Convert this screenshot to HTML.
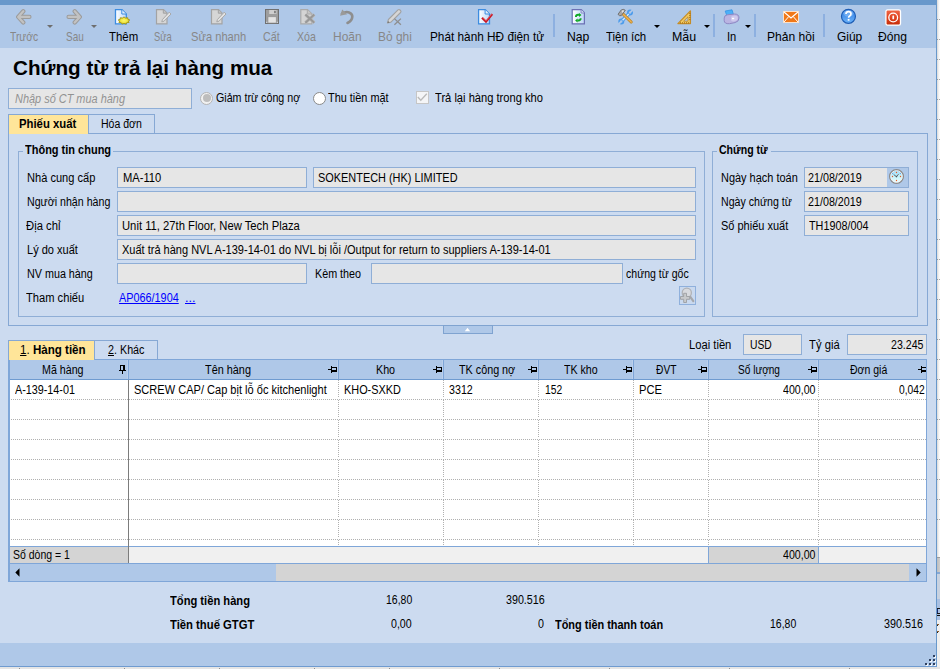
<!DOCTYPE html>
<html lang="vi"><head><meta charset="utf-8"><title>Chứng từ trả lại hàng mua</title>
<style>
html,body{margin:0;padding:0;}
body{width:940px;height:669px;overflow:hidden;background:#CCDBF0;font-family:"Liberation Sans",sans-serif;font-size:12.5px;color:#000;}
#app{position:relative;width:940px;height:669px;overflow:hidden;}
#app div,#app svg,#app span{position:absolute;box-sizing:border-box;}
.t{white-space:nowrap;transform-origin:0 0;z-index:3;}
.inp{background:#E6E6E6;border:1px solid #8FAED6;}
.grp{border:1px solid #8FAED6;}

</style></head><body>
<div id="app">
<!-- window chrome -->
<div style="left:0;top:0;width:937px;height:5px;background:#6898CB"></div>
<div id="tb" style="left:0;top:5px;width:936px;height:43px;background:#AFC8E8"></div>
<!-- right outside strip -->
<div style="left:937px;top:0;width:3px;height:669px;background:linear-gradient(90deg,#D9D9D9,#F4F4F4 60%,#FFFFFF)"></div>
<div style="left:937px;top:557px;width:3px;height:15px;background:linear-gradient(90deg,#BDBDBD,#CECECE)"></div>
<div style="left:937px;top:557px;width:3px;height:1px;background:#9C9C9C"></div>
<div style="left:937px;top:572px;width:3px;height:2px;background:#86A8D4"></div>
<div style="left:937px;top:574px;width:3px;height:25px;background:#C8D2E0"></div>
<div style="left:937px;top:599px;width:3px;height:21px;background:#A9C0E2"></div>
<div style="left:937px;top:608px;width:3px;height:1px;background:#181818"></div>
<div style="left:937px;top:609px;width:1px;height:4px;background:#1A2A6A"></div>
<div style="left:937px;top:613px;width:3px;height:1px;background:#181818"></div>
<div style="left:937px;top:615px;width:3px;height:1px;background:#101010"></div>
<div style="left:937px;top:620px;width:3px;height:49px;background:#EFEFEF"></div>
<div style="left:937px;top:624px;width:2px;height:1px;background:#8A5A2A"></div>
<div style="left:937px;top:625px;width:1px;height:1px;background:#222"></div>
<div style="left:937px;top:631px;width:2px;height:1px;background:#8A5A2A"></div>
<div style="left:937px;top:632px;width:1px;height:1px;background:#222"></div>
<div style="left:937px;top:19px;width:1px;height:520px;background:repeating-linear-gradient(180deg,#9A9A9A 0,#9A9A9A 1px,transparent 1px,transparent 20px)"></div>
<div style="left:939px;top:19px;width:1px;height:520px;background:repeating-linear-gradient(180deg,#A4A4A4 0,#A4A4A4 1px,transparent 1px,transparent 20px)"></div>
<div style="left:936px;top:0;width:1px;height:667px;background:#6898CB"></div>
<!-- status bar -->
<div style="left:0;top:643px;width:936px;height:23px;background:#AFC8E8"></div>
<div style="left:0;top:666px;width:937px;height:1px;background:#6F9BD0"></div>
<div style="left:0;top:667px;width:940px;height:2px;background:#E5E5E5"></div>
<div style="left:19px;top:668px;width:1px;height:1px;background:#8E8E8E"></div>
<div style="left:124px;top:668px;width:1px;height:1px;background:#8E8E8E"></div>
<div style="left:219px;top:668px;width:1px;height:1px;background:#8E8E8E"></div>
<div style="left:314px;top:668px;width:1px;height:1px;background:#8E8E8E"></div>
<div style="left:389px;top:668px;width:1px;height:1px;background:#8E8E8E"></div>
<div style="left:499px;top:668px;width:1px;height:1px;background:#8E8E8E"></div>
<div style="left:609px;top:668px;width:1px;height:1px;background:#8E8E8E"></div>
<div style="left:729px;top:668px;width:1px;height:1px;background:#8E8E8E"></div>
<div style="left:849px;top:668px;width:1px;height:1px;background:#8E8E8E"></div>

<!-- search input -->
<div class="inp" style="left:8px;top:88px;width:184px;height:21px"></div>
<!-- radios / checkbox -->
<div style="left:200px;top:91.500px;width:13px;height:13px;border-radius:50%;border:1px solid #B4B4B4;background:#F1F1F1"></div>
<div style="left:202.500px;top:94px;width:8px;height:8px;border-radius:50%;background:#BDBDBD"></div>
<div style="left:313px;top:91.500px;width:13px;height:13px;border-radius:50%;border:1px solid #8A8A8A;background:#fff"></div>
<div style="left:416px;top:91px;width:13px;height:13px;border:1px solid #C6C6C6;background:#F4F5F7"></div>
<svg style="left:416px;top:91px" width="13" height="13" viewBox="0 0 13 13"><path d="M1.800 6 L4.800 9.300 L10.800 2.800" fill="none" stroke="#BABABA" stroke-width="1.300"/></svg>

<!-- top tabs -->
<div style="left:8px;top:133px;width:920px;height:193px;border:1px solid #86A8D4"></div>
<div style="left:8px;top:114px;width:81px;height:20px;background:#FFE599;border:1px solid #86A8D4;border-bottom:none"></div>
<div style="left:88px;top:114px;width:67px;height:19px;border:1px solid #86A8D4;border-bottom:none"></div>

<!-- group boxes -->
<div class="grp" style="left:18px;top:151px;width:687px;height:166px"></div>
<div style="left:23px;top:144px;width:90px;height:14px;background:#CCDBF0"></div>
<div class="grp" style="left:712px;top:151px;width:206px;height:166px"></div>
<div style="left:717px;top:144px;width:54px;height:14px;background:#CCDBF0"></div>

<!-- inputs group 1 -->
<div class="inp" style="left:117px;top:167px;width:190px;height:21px"></div>
<div class="inp" style="left:313px;top:167px;width:383px;height:21px"></div>
<div class="inp" style="left:117px;top:191px;width:579px;height:21px"></div>
<div class="inp" style="left:117px;top:215px;width:579px;height:21px"></div>
<div class="inp" style="left:117px;top:239px;width:579px;height:21px"></div>
<div class="inp" style="left:117px;top:263px;width:190px;height:21px"></div>
<div class="inp" style="left:371px;top:263px;width:252px;height:21px"></div>
<!-- zoom button -->
<div style="left:679px;top:286px;width:17px;height:19px;border:1px solid #8FB0DC;background:#C9D9EF"></div>
<svg style="left:679px;top:286px" width="17" height="19" viewBox="0 0 17 19"><path d="M10.800 10.200 L14.300 15.200" stroke="#A6A8AC" stroke-width="2.200" stroke-linecap="round"/><circle cx="7.800" cy="6.800" r="4.600" fill="#D8DADE" stroke="#B0B2B6" stroke-width="1.300"/><path d="M4.700 7.300h2.800v3.200h3.200v2.800h-3.200v3.200h-2.800v-3.200h-3.200v-2.800h3.200z" fill="#C8CACC" stroke="#9C9EA2" stroke-width=".9"/></svg>

<!-- inputs group 2 -->
<div class="inp" style="left:804px;top:167px;width:105px;height:21px"></div>
<div style="left:887px;top:168px;width:21px;height:19px;background:#AFC8E8"></div>
<svg style="left:888px;top:168px" width="17" height="17" viewBox="0 0 17 17"><defs><linearGradient id="cg" x1="0" y1="0" x2="0" y2="1"><stop offset="0" stop-color="#9CD8F8"/><stop offset=".55" stop-color="#C8F4FA"/><stop offset="1" stop-color="#F4FEFE"/></linearGradient></defs><circle cx="8.500" cy="8.500" r="6.700" fill="url(#cg)" stroke="#8C8C8C" stroke-width="1.700"/><circle cx="8.500" cy="8.500" r="5.900" fill="none" stroke="#F2F6F8" stroke-width=".9"/><g fill="#F05820"><circle cx="8.500" cy="4.500" r=".65"/><circle cx="8.500" cy="12.500" r=".65"/><circle cx="4.500" cy="8.500" r=".65"/><circle cx="12.500" cy="8.500" r=".65"/></g><g fill="#3C8CE4"><circle cx="4.700" cy="5.500" r=".5"/><circle cx="12.300" cy="5.500" r=".5"/></g><path d="M5.700 6.600 L8.500 8.600 L10.500 6.200" fill="none" stroke="#50585C" stroke-width=".9"/><circle cx="8.500" cy="8.600" r=".8" fill="#50585C"/></svg>
<div class="inp" style="left:804px;top:191px;width:105px;height:21px"></div>
<div class="inp" style="left:804px;top:215px;width:105px;height:21px"></div>

<!-- splitter button -->
<div style="left:443px;top:325px;width:50px;height:9px;background:#AFC8E8;border:1px solid #7FA3D0"></div>
<svg style="left:464px;top:327px" width="7" height="5" viewBox="0 0 7 5"><path d="M0.800 4.200 L3.500 0.800 L6.200 4.200Z" fill="#fff"/></svg>

<!-- lower tabs -->
<div style="z-index:2;left:8px;top:340px;width:87px;height:20px;background:#FFE599;border:1px solid #86A8D4;border-bottom:none"></div>
<div style="left:94px;top:340px;width:64px;height:19px;border:1px solid #86A8D4;border-bottom:none"></div>
<div class="inp" style="left:743px;top:334px;width:59px;height:21px"></div>
<div class="inp" style="left:847px;top:334px;width:80px;height:21px"></div>

<!-- grid -->
<div style="left:8px;top:359px;width:1px;height:223px;background:#7FA6D8"></div>
<div id="grid" style="left:9px;top:359px;width:918px;height:223px;background:#fff;border:1px solid #7FA6D8"></div>
<div style="left:10px;top:360px;width:916px;height:20px;background:#AFC8E8;border-bottom:1px solid #6F9BD0"></div>
<div style="left:128px;top:360px;width:1px;height:19px;background:#7FA6D8"></div>
<div style="left:127px;top:360px;width:1px;height:19px;background:#BBD0EC"></div>
<div style="left:338px;top:360px;width:1px;height:19px;background:#7FA6D8"></div>
<div style="left:337px;top:360px;width:1px;height:19px;background:#BBD0EC"></div>
<div style="left:443px;top:360px;width:1px;height:19px;background:#7FA6D8"></div>
<div style="left:442px;top:360px;width:1px;height:19px;background:#BBD0EC"></div>
<div style="left:538px;top:360px;width:1px;height:19px;background:#7FA6D8"></div>
<div style="left:537px;top:360px;width:1px;height:19px;background:#BBD0EC"></div>
<div style="left:633px;top:360px;width:1px;height:19px;background:#7FA6D8"></div>
<div style="left:632px;top:360px;width:1px;height:19px;background:#BBD0EC"></div>
<div style="left:708px;top:360px;width:1px;height:19px;background:#7FA6D8"></div>
<div style="left:707px;top:360px;width:1px;height:19px;background:#BBD0EC"></div>
<div style="left:818px;top:360px;width:1px;height:19px;background:#7FA6D8"></div>
<div style="left:817px;top:360px;width:1px;height:19px;background:#BBD0EC"></div>
<div style="left:128px;top:380px;width:1px;height:183px;background:#7C7C7C"></div>
<div style="left:338px;top:380px;width:1px;height:166px;background:repeating-linear-gradient(180deg,transparent 0,transparent 17px,#fff 17px,#fff 20px),repeating-linear-gradient(180deg,#B0B0B0 0,#B0B0B0 1px,transparent 1px,transparent 2px)"></div>
<div style="left:443px;top:380px;width:1px;height:166px;background:repeating-linear-gradient(180deg,transparent 0,transparent 17px,#fff 17px,#fff 20px),repeating-linear-gradient(180deg,#B0B0B0 0,#B0B0B0 1px,transparent 1px,transparent 2px)"></div>
<div style="left:538px;top:380px;width:1px;height:166px;background:repeating-linear-gradient(180deg,transparent 0,transparent 17px,#fff 17px,#fff 20px),repeating-linear-gradient(180deg,#B0B0B0 0,#B0B0B0 1px,transparent 1px,transparent 2px)"></div>
<div style="left:633px;top:380px;width:1px;height:166px;background:repeating-linear-gradient(180deg,transparent 0,transparent 17px,#fff 17px,#fff 20px),repeating-linear-gradient(180deg,#B0B0B0 0,#B0B0B0 1px,transparent 1px,transparent 2px)"></div>
<div style="left:708px;top:380px;width:1px;height:166px;background:repeating-linear-gradient(180deg,transparent 0,transparent 17px,#fff 17px,#fff 20px),repeating-linear-gradient(180deg,#B0B0B0 0,#B0B0B0 1px,transparent 1px,transparent 2px)"></div>
<div style="left:818px;top:380px;width:1px;height:166px;background:repeating-linear-gradient(180deg,transparent 0,transparent 17px,#fff 17px,#fff 20px),repeating-linear-gradient(180deg,#B0B0B0 0,#B0B0B0 1px,transparent 1px,transparent 2px)"></div>
<div style="left:11px;top:399px;width:915px;height:1px;background:repeating-linear-gradient(90deg,#B0B0B0 0,#B0B0B0 1px,transparent 1px,transparent 2px)"></div>
<div style="left:11px;top:419px;width:915px;height:1px;background:repeating-linear-gradient(90deg,#B0B0B0 0,#B0B0B0 1px,transparent 1px,transparent 2px)"></div>
<div style="left:11px;top:439px;width:915px;height:1px;background:repeating-linear-gradient(90deg,#B0B0B0 0,#B0B0B0 1px,transparent 1px,transparent 2px)"></div>
<div style="left:11px;top:459px;width:915px;height:1px;background:repeating-linear-gradient(90deg,#B0B0B0 0,#B0B0B0 1px,transparent 1px,transparent 2px)"></div>
<div style="left:11px;top:479px;width:915px;height:1px;background:repeating-linear-gradient(90deg,#B0B0B0 0,#B0B0B0 1px,transparent 1px,transparent 2px)"></div>
<div style="left:11px;top:499px;width:915px;height:1px;background:repeating-linear-gradient(90deg,#B0B0B0 0,#B0B0B0 1px,transparent 1px,transparent 2px)"></div>
<div style="left:11px;top:519px;width:915px;height:1px;background:repeating-linear-gradient(90deg,#B0B0B0 0,#B0B0B0 1px,transparent 1px,transparent 2px)"></div>
<div style="left:11px;top:539px;width:915px;height:1px;background:repeating-linear-gradient(90deg,#B0B0B0 0,#B0B0B0 1px,transparent 1px,transparent 2px)"></div>
<div style="left:128px;top:380px;width:1px;height:183px;background:#7C7C7C"></div>
<div style="left:10px;top:546px;width:916px;height:18px;background:#F0F0F0;border-top:1px solid #7FA6D8;border-bottom:1px solid #7FA6D8"></div>
<div style="left:10px;top:547px;width:118px;height:16px;background:#D4D4D4"></div>
<div style="left:128px;top:546px;width:1px;height:17px;background:#7C7C7C"></div>
<div style="left:708px;top:547px;width:111px;height:16px;background:#D4D4D4;border-left:1px solid #7FA6D8;border-right:1px solid #7FA6D8"></div>
<div style="left:10px;top:564px;width:916px;height:17px;background:#D4D4D4"></div>
<div style="left:10px;top:564px;width:266px;height:17px;background:#AFC8E8"></div>
<div style="left:909px;top:564px;width:17px;height:17px;background:#AFC8E8"></div>
<svg style="left:14.600px;top:568px" width="5" height="9" viewBox="0 0 5 9"><path d="M4.500 0.300 L0.300 4.500 L4.500 8.700Z" fill="#000"/></svg>
<svg style="left:915.600px;top:568px" width="5" height="9" viewBox="0 0 5 9"><path d="M0.500 0.300 L4.700 4.500 L0.500 8.700Z" fill="#000"/></svg>
<!-- resize grip -->
<svg style="left:925px;top:655px" width="11" height="11" viewBox="0 0 11 11" shape-rendering="crispEdges"><g fill="#F4F8FC"><rect x="9" y="1" width="2" height="2"/><rect x="5" y="5" width="2" height="2"/><rect x="9" y="5" width="2" height="2"/><rect x="1" y="9" width="2" height="2"/><rect x="5" y="9" width="2" height="2"/><rect x="9" y="9" width="2" height="2"/></g><g fill="#2E4060"><rect x="8" y="0" width="2" height="2"/><rect x="4" y="4" width="2" height="2"/><rect x="8" y="4" width="2" height="2"/><rect x="0" y="8" width="2" height="2"/><rect x="4" y="8" width="2" height="2"/><rect x="8" y="8" width="2" height="2"/></g></svg>
<!-- toolbar icons -->
<svg style="left:15.500px;top:8.500px" width="16" height="16" viewBox="0 0 16 16" fill="none" stroke-linecap="round" stroke-linejoin="round"><path d="M7.300 2.300 L2.200 7.900 L7.300 13.500 M3 7.900 H13.400" stroke="#9B9B9B" stroke-width="4.300"/><path d="M7.300 2.300 L2.200 7.900 L7.300 13.500 M3 7.900 H13.400" stroke="#C2C2C2" stroke-width="2.300"/></svg>
<svg style="left:65.800px;top:8.500px" width="16" height="16" viewBox="0 0 16 16" fill="none" stroke-linecap="round" stroke-linejoin="round"><path d="M8.700 2.300 L13.800 7.900 L8.700 13.500 M13 7.900 H2.600" stroke="#9B9B9B" stroke-width="4.300"/><path d="M8.700 2.300 L13.800 7.900 L8.700 13.500 M13 7.900 H2.600" stroke="#C2C2C2" stroke-width="2.300"/></svg>
<svg style="left:47px;top:25px" width="6" height="3" viewBox="0 0 6 3"><path d="M0 0H6L3 3Z" fill="#6E6E6E"/></svg>
<svg style="left:91px;top:25px" width="6" height="3" viewBox="0 0 6 3"><path d="M0 0H6L3 3Z" fill="#6E6E6E"/></svg>
<!-- Them -->
<svg style="left:114px;top:9px" width="17" height="16" viewBox="0 0 17 16"><path d="M1.5 0.7 H8 L12.300 5 V14.8 H1.5 Z" fill="url(#pg)" stroke="#3C8CE0" stroke-width="1.3"/><path d="M7.800 0.8 V5 H12.2" fill="#E4F0FC" stroke="#3C8CE0" stroke-width="1"/><defs><radialGradient id="sg"><stop offset="0" stop-color="#FBF66E"/><stop offset=".55" stop-color="#F2E840"/><stop offset="1" stop-color="#C4B420"/></radialGradient><linearGradient id="pg" x1="0" y1="0" x2="1" y2="0"><stop offset="0" stop-color="#FFFFFF"/><stop offset="1" stop-color="#BCD8F8"/></linearGradient></defs><polygon points="10.0,7.9 11.5,9.0 13.8,8.8 13.8,10.2 15.8,11.0 14.3,12.1 15.1,13.4 12.8,13.7 12.0,15.1 10.0,14.3 8.0,15.1 7.2,13.7 4.9,13.4 5.7,12.1 4.2,11.0 6.2,10.2 6.2,8.8 8.5,9.0" fill="url(#sg)" stroke="#A89A14" stroke-width=".9"/></svg>
<!-- Sua -->
<svg style="left:155px;top:9px" width="17" height="16" viewBox="0 0 17 16"><path d="M1.500 0.7 H8.5 L12 4 V14.800 H1.5 Z" fill="#D6D6D6" stroke="#A3A3A3" stroke-width="1.2"/><path d="M8.3 0.800 V4.2 H11.9" fill="#C4C4C4" stroke="#A3A3A3" stroke-width="1"/><path d="M14.200 3.2 L16 5 L9 12.2 L6.8 12.900 L7.4 10.600 Z" fill="#E2E2E2" stroke="#A9A9A9" stroke-width="1"/></svg>
<svg style="left:209.5px;top:9px" width="17" height="16" viewBox="0 0 17 16"><path d="M1.5 0.7 H8.5 L12 4 V14.8 H1.5 Z" fill="#D6D6D6" stroke="#A3A3A3" stroke-width="1.2"/><path d="M8.3 0.8 V4.2 H11.900" fill="#C4C4C4" stroke="#A3A3A3" stroke-width="1"/><path d="M14.2 3.2 L16 5 L9 12.2 L6.8 12.9 L7.4 10.6 Z" fill="#E2E2E2" stroke="#A9A9A9" stroke-width="1"/></svg>
<!-- Cat (floppy) -->
<svg style="left:265px;top:9px" width="14" height="15" viewBox="0 0 14 15"><rect x=".5" y=".5" width="13" height="14" fill="#9E9E9E" stroke="#707070" stroke-width="1"/><rect x="4.200" y="1" width="7.300" height="4" fill="#CFCFCF"/><rect x="9.200" y="1.800" width="1.500" height="2.400" fill="#6E6E6E"/><rect x="3" y="7.800" width="8.200" height="6.200" fill="#E4E4E4" stroke="#8C8C8C" stroke-width=".6"/><rect x="1.200" y="12.800" width="1" height="1" fill="#E4ECF8"/><rect x="11.800" y="12.800" width="1" height="1" fill="#E4ECF8"/></svg>
<!-- Xoa -->
<svg style="left:299px;top:9px" width="18" height="16" viewBox="0 0 18 16"><path d="M1.800 0.700 H8.500 L12.800 4.800 V14.800 H1.800 Z" fill="#D4D4D4" stroke="#AAAAAA" stroke-width="1.200"/><path d="M8.300 0.800 V5 H12.700" fill="#C6C6C6" stroke="#AAAAAA" stroke-width="1"/><path d="M6.400 5.600 L15.300 13.800 M15.300 5.600 L6.400 13.800" stroke="#BEBEBE" stroke-width="3.400" fill="none"/><path d="M6.400 5.600 L15.300 13.800 M15.300 5.600 L6.400 13.800" stroke="#989898" stroke-width="2" fill="none"/></svg>
<!-- Hoan (undo) -->
<svg style="left:339px;top:8px" width="17" height="17" viewBox="0 0 17 17"><path d="M3 5.500 C8 2.500 13.500 4.500 13.300 8.800 C13.200 11.500 11 13.800 8.500 15" fill="none" stroke="#8E8E8E" stroke-width="2.600" stroke-linecap="round"/><path d="M1 7.800 L3.200 1.500 L8.200 6.200 Z" fill="#9A9A9A"/></svg>
<!-- Bo ghi -->
<svg style="left:386px;top:8px" width="17" height="18" viewBox="0 0 17 18"><path d="M1.500 15 L2.400 11.500 L12 1.900 Q13 1 14 2 L14.600 2.600 Q15.500 3.600 14.600 4.500 L5 14.100 Z" fill="#D6D6D6" stroke="#A2A2A2" stroke-width="1.100" stroke-linejoin="round"/><path d="M1.500 15 L2 13 L3.500 14.500 Z" fill="#6E6E6E"/><path d="M8.400 10.600 L14.900 16.800 M14.900 10.600 L8.400 16.800" stroke="#8E8E8E" stroke-width="1.300" fill="none"/></svg>
<!-- Phat hanh HD dien tu -->
<svg style="left:477px;top:9px" width="17" height="16" viewBox="0 0 17 16"><path d="M1.600 0.700 H8.300 L12.500 4.900 V14.800 H1.600 Z" fill="url(#pg)" stroke="#3C8CE0" stroke-width="1.300"/><path d="M8.100 0.800 V5 H12.400" fill="#E4F0FC" stroke="#3C8CE0" stroke-width="1"/><path d="M5 8.700 L9 12.800 L15.300 5.200" fill="none" stroke="#C81824" stroke-width="2.100" stroke-linejoin="miter"/><path d="M5.600 8.300 L9 11.800 L14.800 4.800" fill="none" stroke="#F08088" stroke-width=".7" opacity=".8"/></svg>
<!-- Nap -->
<svg style="left:570.800px;top:9px" width="15" height="16" viewBox="0 0 15 16"><path d="M1.200 0.700 H10.300 L13.400 3.800 V14.800 H1.200 Z" fill="url(#pg)" stroke="#6C70B4" stroke-width="1.200"/><path d="M10.100 0.800 V4 H13.300" fill="#DCE8FA" stroke="#7C80C0" stroke-width=".9"/><g transform="translate(7.300 8.600) scale(.8) translate(-7.300 -8.800)"><g fill="none" stroke="#10A824" stroke-width="2.300"><path d="M4.300 8 Q4.300 5.200 7.300 5.200 H8.500"/><path d="M10.300 9.600 Q10.300 12.400 7.300 12.400 H6.100"/></g><path d="M8.200 2.900 L11.300 5.400 L8.200 7.900 Z M6.400 10 L3.300 12.400 L6.400 14.800 Z" fill="#10A824"/></g></svg>
<!-- Tien ich -->
<svg style="left:617px;top:8px" width="17" height="17" viewBox="0 0 17 17"><g fill="none"><path d="M5 12.800 L12.300 5.300" stroke="#4C9CEC" stroke-width="3.400"/><circle cx="13" cy="4.600" r="2.100" stroke="#4C9CEC" stroke-width="1.800" fill="#AFC8E8"/><circle cx="4.300" cy="13.400" r="2.100" stroke="#4C9CEC" stroke-width="1.800" fill="#AFC8E8"/><path d="M13 4.600 L16 1.600 M4.300 13.400 L1.300 16.400" stroke="#AFC8E8" stroke-width="1.900"/><path d="M5.600 12.200 L11.700 5.900" stroke="#D4EAFC" stroke-width="1.400"/></g><path d="M5.500 5.500 L14.200 14" stroke="#B8801C" stroke-width="3" stroke-linecap="round"/><path d="M5.500 5.500 L14.200 14" stroke="#ECB050" stroke-width="1.700" stroke-linecap="round"/><path d="M1 6.300 L4.200 2 Q6.500 0.600 8.300 2.300 L4.300 7.600 Q2.300 8.300 1 6.300 Z" fill="#A8A8A8" stroke="#686868" stroke-width=".9"/><path d="M4.600 2.600 Q6.300 1.800 7.300 2.700 L5.400 5.100 Z" fill="#E0E0E0"/></svg>
<svg style="left:654px;top:25px" width="6" height="3" viewBox="0 0 6 3"><path d="M0 0H6L3 3Z" fill="#000"/></svg>
<!-- Mau (set square) -->
<svg style="left:677px;top:9.800px" width="15" height="15" viewBox="0 0 15 15"><path d="M13.400 0.900 V13.600 H0.900 Z" fill="#F2CA62" stroke="#C48C28" stroke-width="1.300" stroke-linejoin="round"/><path d="M11 6.800 V11.200 H6.600 Z" fill="#AFC8E8" stroke="#C48C28" stroke-width=".9"/><path d="M3.500 12v1.500M5.500 12v1.500M7.500 12v1.500M9.500 12v1.500M11.500 12v1.500M12 3.500h1.500M12 5.500h1.500M12 7.500h1.500M12 9.500h1.500" stroke="#A06C14" stroke-width=".7"/></svg>
<svg style="left:703.500px;top:25px" width="6" height="3" viewBox="0 0 6 3"><path d="M0 0H6L3 3Z" fill="#000"/></svg>
<!-- In (printer) -->
<svg style="left:723px;top:9px" width="17" height="16" viewBox="0 0 17 16"><path d="M2.200 2 L9 0.800 L10.400 5.400 L3.800 6.600 Z" fill="#4CB0F8" stroke="#3494E4" stroke-width=".8"/><path d="M1.200 9 Q1.200 6.200 4.500 5.800 L11.500 5 Q16 5 16 9 Q16 12.600 12 13.600 L6.500 14.700 Q1.200 15 1.200 11.500 Z" fill="#BAB4E2" stroke="#8E88C4" stroke-width="1"/><path d="M8 8.600 Q8 6.600 11.500 6.400 Q14.800 6.500 14.800 9 Q14.800 11.600 11.500 12.300 Q8 13 8 10.800 Z" fill="#CFCAEE"/><rect x="9" y="8.800" width="2.200" height="1.400" fill="#fff"/></svg>
<svg style="left:745px;top:25px" width="6" height="3" viewBox="0 0 6 3"><path d="M0 0H6L3 3Z" fill="#000"/></svg>
<!-- Phan hoi (mail) -->
<svg style="left:783px;top:11px" width="16" height="12" viewBox="0 0 16 12"><rect x=".5" y=".5" width="15" height="11" fill="#F07818" stroke="#FBE0C8" stroke-width="1"/><path d="M1 1 L8 7 L15 1" fill="none" stroke="#fff" stroke-width="1.200"/><path d="M1 11 L5.800 5.500 M15 11 L10.200 5.500" stroke="#fff" stroke-width="1"/></svg>
<!-- Giup -->
<svg style="left:840px;top:8px" width="17" height="17" viewBox="0 0 17 17"><defs><linearGradient id="hg" x1="0" y1="0" x2="0" y2="1"><stop offset="0" stop-color="#2C78E0"/><stop offset="1" stop-color="#6CB4FA"/></linearGradient></defs><circle cx="8.450" cy="8.300" r="7" fill="url(#hg)" stroke="#1C5CB4" stroke-width="1.200"/><ellipse cx="8.450" cy="5.300" rx="5" ry="3.300" fill="#A4D0FC" opacity=".45"/><path d="M6 6.100 Q6 3.700 8.500 3.700 Q11 3.700 11 5.800 Q11 7.200 9.700 7.900 Q8.600 8.500 8.600 9.700" fill="none" stroke="#fff" stroke-width="1.700"/><rect x="7.700" y="10.900" width="1.800" height="1.800" fill="#fff"/></svg>
<!-- Dong -->
<svg style="left:884.800px;top:8.600px" width="17" height="17" viewBox="0 0 17 17"><defs><linearGradient id="dg" x1="0" y1="0" x2="0" y2="1"><stop offset="0" stop-color="#F06848"/><stop offset=".5" stop-color="#E04420"/><stop offset="1" stop-color="#C42C08"/></linearGradient></defs><rect x=".9" y=".9" width="14.600" height="15.200" rx="1.600" fill="url(#dg)" stroke="#fff" stroke-width="1.300"/><circle cx="8.200" cy="8.500" r="4.400" fill="none" stroke="#fff" stroke-width="1.300"/><rect x="7.400" y="6.600" width="1.700" height="3.700" rx=".4" fill="#fff"/></svg>
<!-- separators -->
<div style="left:553px;top:14px;width:2px;height:23px;background:#8DB0E0"></div>
<div style="left:713px;top:14px;width:2px;height:23px;background:#8DB0E0"></div>
<div style="left:754px;top:14px;width:2px;height:23px;background:#8DB0E0"></div>
<div style="left:823px;top:14px;width:2px;height:23px;background:#8DB0E0"></div>
<svg style="left:328px;top:366px" width="9" height="7" viewBox="0 0 9 7" shape-rendering="crispEdges"><rect x="0" y="3" width="3" height="1"/><rect x="3" y="0" width="1" height="7"/><rect x="4" y="1" width="5" height="1"/><rect x="4" y="4" width="5" height="2"/><rect x="8" y="1" width="1" height="5"/></svg><svg style="left:433px;top:366px" width="9" height="7" viewBox="0 0 9 7" shape-rendering="crispEdges"><rect x="0" y="3" width="3" height="1"/><rect x="3" y="0" width="1" height="7"/><rect x="4" y="1" width="5" height="1"/><rect x="4" y="4" width="5" height="2"/><rect x="8" y="1" width="1" height="5"/></svg><svg style="left:528px;top:366px" width="9" height="7" viewBox="0 0 9 7" shape-rendering="crispEdges"><rect x="0" y="3" width="3" height="1"/><rect x="3" y="0" width="1" height="7"/><rect x="4" y="1" width="5" height="1"/><rect x="4" y="4" width="5" height="2"/><rect x="8" y="1" width="1" height="5"/></svg><svg style="left:623px;top:366px" width="9" height="7" viewBox="0 0 9 7" shape-rendering="crispEdges"><rect x="0" y="3" width="3" height="1"/><rect x="3" y="0" width="1" height="7"/><rect x="4" y="1" width="5" height="1"/><rect x="4" y="4" width="5" height="2"/><rect x="8" y="1" width="1" height="5"/></svg><svg style="left:698px;top:366px" width="9" height="7" viewBox="0 0 9 7" shape-rendering="crispEdges"><rect x="0" y="3" width="3" height="1"/><rect x="3" y="0" width="1" height="7"/><rect x="4" y="1" width="5" height="1"/><rect x="4" y="4" width="5" height="2"/><rect x="8" y="1" width="1" height="5"/></svg><svg style="left:808px;top:366px" width="9" height="7" viewBox="0 0 9 7" shape-rendering="crispEdges"><rect x="0" y="3" width="3" height="1"/><rect x="3" y="0" width="1" height="7"/><rect x="4" y="1" width="5" height="1"/><rect x="4" y="4" width="5" height="2"/><rect x="8" y="1" width="1" height="5"/></svg><svg style="left:918px;top:366px" width="8" height="7" viewBox="0 0 8 7" shape-rendering="crispEdges"><rect x="0" y="3" width="3" height="1"/><rect x="3" y="0" width="1" height="7"/><rect x="4" y="1" width="4" height="1"/><rect x="4" y="4" width="4" height="2"/></svg><svg style="left:119px;top:365px" width="7" height="9" viewBox="0 0 7 9" shape-rendering="crispEdges"><rect x="1" y="0" width="5" height="1"/><rect x="1" y="0" width="1" height="6"/><rect x="4" y="0" width="2" height="6"/><rect x="0" y="5" width="7" height="1"/><rect x="3" y="6" width="1" height="3"/></svg>
<span class="t" style="left:9.50px;top:28.50px;font-size:13px;line-height:16px;transform:scaleX(0.7913);color:#878787;">Trước</span>
<span class="t" style="left:65.50px;top:28.50px;font-size:13px;line-height:16px;transform:scaleX(0.7642);color:#878787;">Sau</span>
<span class="t" style="left:109.20px;top:28.50px;font-size:13px;line-height:16px;transform:scaleX(0.8765);">Thêm</span>
<span class="t" style="left:154.25px;top:28.50px;font-size:13px;line-height:16px;transform:scaleX(0.7193);color:#878787;">Sửa</span>
<span class="t" style="left:191.25px;top:28.50px;font-size:13px;line-height:16px;transform:scaleX(0.8576);color:#878787;">Sửa nhanh</span>
<span class="t" style="left:263.00px;top:28.50px;font-size:13px;line-height:16px;transform:scaleX(0.8245);color:#878787;">Cất</span>
<span class="t" style="left:297.00px;top:28.50px;font-size:13px;line-height:16px;transform:scaleX(0.8159);color:#878787;">Xóa</span>
<span class="t" style="left:332.83px;top:28.50px;font-size:13px;line-height:16px;transform:scaleX(0.9213);color:#878787;">Hoãn</span>
<span class="t" style="left:377.83px;top:28.50px;font-size:13px;line-height:16px;transform:scaleX(0.9174);color:#878787;">Bỏ ghi</span>
<span class="t" style="left:429.84px;top:28.50px;font-size:13px;line-height:16px;transform:scaleX(0.9074);">Phát hành HĐ điện tử</span>
<span class="t" style="left:566.56px;top:28.50px;font-size:13px;line-height:16px;transform:scaleX(0.9395);">Nạp</span>
<span class="t" style="left:606.25px;top:28.50px;font-size:13px;line-height:16px;transform:scaleX(0.8785);">Tiện ích</span>
<span class="t" style="left:671.54px;top:28.50px;font-size:13px;line-height:16px;transform:scaleX(0.9560);">Mẫu</span>
<span class="t" style="left:727.14px;top:28.50px;font-size:13px;line-height:16px;transform:scaleX(0.8583);">In</span>
<span class="t" style="left:767.32px;top:28.50px;font-size:13px;line-height:16px;transform:scaleX(0.9270);">Phản hồi</span>
<span class="t" style="left:837.00px;top:28.50px;font-size:13px;line-height:16px;transform:scaleX(0.9181);">Giúp</span>
<span class="t" style="left:877.50px;top:28.50px;font-size:13px;line-height:16px;transform:scaleX(0.9320);">Đóng</span>
<span class="t" style="left:12.50px;top:57.24px;font-size:19.5px;line-height:23px;transform:scaleX(1.0589);font-weight:bold;">Chứng từ trả lại hàng mua</span>
<span class="t" style="left:15.00px;top:92.17px;font-size:12.5px;line-height:15px;transform:scaleX(0.8743);font-style:italic;color:#929292;">Nhập số CT mua hàng</span>
<span class="t" style="left:216.00px;top:91.17px;font-size:12.5px;line-height:15px;transform:scaleX(0.8541);">Giảm trừ công nợ</span>
<span class="t" style="left:328.00px;top:91.17px;font-size:12.5px;line-height:15px;transform:scaleX(0.8714);">Thu tiền mặt</span>
<span class="t" style="left:435.00px;top:91.17px;font-size:12.5px;line-height:15px;transform:scaleX(0.8912);">Trả lại hàng trong kho</span>
<span class="t" style="left:19.00px;top:117.17px;font-size:12.5px;line-height:15px;transform:scaleX(0.9056);font-weight:bold;">Phiếu xuất</span>
<span class="t" style="left:100.96px;top:117.17px;font-size:12.5px;line-height:15px;transform:scaleX(0.8412);">Hóa đơn</span>
<span class="t" style="left:25.00px;top:142.67px;font-size:12.5px;line-height:15px;transform:scaleX(0.8792);font-weight:bold;">Thông tin chung</span>
<span class="t" style="left:719.30px;top:142.67px;font-size:12.5px;line-height:15px;transform:scaleX(0.8444);font-weight:bold;">Chứng từ</span>
<span class="t" style="left:26.61px;top:171.17px;font-size:12.5px;line-height:15px;transform:scaleX(0.8860);">Nhà cung cấp</span>
<span class="t" style="left:26.65px;top:195.17px;font-size:12.5px;line-height:15px;transform:scaleX(0.8511);">Người nhận hàng</span>
<span class="t" style="left:26.40px;top:219.17px;font-size:12.5px;line-height:15px;transform:scaleX(0.9003);">Địa chỉ</span>
<span class="t" style="left:26.62px;top:243.17px;font-size:12.5px;line-height:15px;transform:scaleX(0.8828);">Lý do xuất</span>
<span class="t" style="left:26.64px;top:267.17px;font-size:12.5px;line-height:15px;transform:scaleX(0.8611);">NV mua hàng</span>
<span class="t" style="left:26.20px;top:291.17px;font-size:12.5px;line-height:15px;transform:scaleX(0.8920);">Tham chiếu</span>
<span class="t" style="left:122.51px;top:171.17px;font-size:12.5px;line-height:15px;transform:scaleX(0.8928);">MA-110</span>
<span class="t" style="left:318.00px;top:171.17px;font-size:12.5px;line-height:15px;transform:scaleX(0.8735);">SOKENTECH (HK) LIMITED</span>
<span class="t" style="left:122.00px;top:219.17px;font-size:12.5px;line-height:15px;transform:scaleX(0.8998);">Unit 11, 27th Floor, New Tech Plaza</span>
<span class="t" style="left:121.75px;top:243.17px;font-size:12.5px;line-height:15px;transform:scaleX(0.8805);">Xuất trả hàng NVL A-139-14-01 do NVL bị lỗi /Output for return to suppliers A-139-14-01</span>
<span class="t" style="left:314.64px;top:267.17px;font-size:12.5px;line-height:15px;transform:scaleX(0.8611);">Kèm theo</span>
<span class="t" style="left:626.25px;top:267.17px;font-size:12.5px;line-height:15px;transform:scaleX(0.8427);">chứng từ gốc</span>
<span class="t" style="left:119.00px;top:290.67px;font-size:12.5px;line-height:15px;transform:scaleX(0.8677);color:#0000FF;text-decoration:underline;">AP066/1904</span>
<span class="t" style="left:185.49px;top:290.67px;font-size:12.5px;line-height:15px;transform:scaleX(1.0061);color:#0000FF;text-decoration:underline;">...</span>
<span class="t" style="left:721.42px;top:171.17px;font-size:12.5px;line-height:15px;transform:scaleX(0.8764);">Ngày hạch toán</span>
<span class="t" style="left:721.45px;top:195.17px;font-size:12.5px;line-height:15px;transform:scaleX(0.8480);">Ngày chứng từ</span>
<span class="t" style="left:721.25px;top:219.17px;font-size:12.5px;line-height:15px;transform:scaleX(0.8789);">Số phiếu xuất</span>
<span class="t" style="left:808.25px;top:171.17px;font-size:12.5px;line-height:15px;transform:scaleX(0.8585);">21/08/2019</span>
<span class="t" style="left:808.25px;top:195.17px;font-size:12.5px;line-height:15px;transform:scaleX(0.8585);">21/08/2019</span>
<span class="t" style="left:808.50px;top:219.17px;font-size:12.5px;line-height:15px;transform:scaleX(0.8642);">TH1908/004</span>
<span class="t" style="left:19.50px;top:343.17px;font-size:12.5px;line-height:15px;transform:scaleX(0.9258);font-weight:bold;"><i style="font-style:normal;font-weight:normal"><u>1</u>.</i> Hàng tiền</span>
<span class="t" style="left:107.50px;top:343.17px;font-size:12.5px;line-height:15px;transform:scaleX(0.8602);"><u>2</u>. Khác</span>
<span class="t" style="left:689.40px;top:338.17px;font-size:12.5px;line-height:15px;transform:scaleX(0.8962);">Loại tiền</span>
<span class="t" style="left:749.50px;top:338.17px;font-size:12.5px;line-height:15px;transform:scaleX(0.8250);">USD</span>
<span class="t" style="left:808.80px;top:338.17px;font-size:12.5px;line-height:15px;transform:scaleX(0.9006);">Tỷ giá</span>
<span class="t" style="left:891.25px;top:338.17px;font-size:12.5px;line-height:15px;transform:scaleX(0.8490);">23.245</span>
<span class="t" style="left:41.65px;top:363.17px;font-size:12.5px;line-height:15px;transform:scaleX(0.8544);">Mã hàng</span>
<span class="t" style="left:205.00px;top:363.17px;font-size:12.5px;line-height:15px;transform:scaleX(0.8701);">Tên hàng</span>
<span class="t" style="left:375.89px;top:363.17px;font-size:12.5px;line-height:15px;transform:scaleX(0.8572);">Kho</span>
<span class="t" style="left:458.50px;top:363.17px;font-size:12.5px;line-height:15px;transform:scaleX(0.8619);">TK công nợ</span>
<span class="t" style="left:563.75px;top:363.17px;font-size:12.5px;line-height:15px;transform:scaleX(0.8512);">TK kho</span>
<span class="t" style="left:655.50px;top:363.17px;font-size:12.5px;line-height:15px;transform:scaleX(0.8181);">ĐVT</span>
<span class="t" style="left:737.50px;top:363.17px;font-size:12.5px;line-height:15px;transform:scaleX(0.8068);">Số lượng</span>
<span class="t" style="left:849.50px;top:363.17px;font-size:12.5px;line-height:15px;transform:scaleX(0.8394);">Đơn giá</span>
<span class="t" style="left:15.00px;top:383.17px;font-size:12.5px;line-height:15px;transform:scaleX(0.8629);">A-139-14-01</span>
<span class="t" style="left:133.80px;top:383.17px;font-size:12.5px;line-height:15px;transform:scaleX(0.8835);">SCREW CAP/ Cap bịt lỗ ốc kitchenlight</span>
<span class="t" style="left:343.63px;top:383.17px;font-size:12.5px;line-height:15px;transform:scaleX(0.8714);">KHO-SXKD</span>
<span class="t" style="left:448.60px;top:383.17px;font-size:12.5px;line-height:15px;transform:scaleX(0.8544);">3312</span>
<span class="t" style="left:544.80px;top:383.17px;font-size:12.5px;line-height:15px;transform:scaleX(0.8228);">152</span>
<span class="t" style="left:638.61px;top:383.17px;font-size:12.5px;line-height:15px;transform:scaleX(0.8927);">PCE</span>
<span class="t" style="left:783.25px;top:383.17px;font-size:12.5px;line-height:15px;transform:scaleX(0.8490);">400,00</span>
<span class="t" style="left:898.75px;top:383.17px;font-size:12.5px;line-height:15px;transform:scaleX(0.8219);">0,042</span>
<span class="t" style="left:13.00px;top:548.17px;font-size:12.5px;line-height:15px;transform:scaleX(0.8405);">Số dòng = 1</span>
<span class="t" style="left:783.25px;top:548.17px;font-size:12.5px;line-height:15px;transform:scaleX(0.8490);">400,00</span>
<span class="t" style="left:169.60px;top:593.77px;font-size:12.5px;line-height:15px;transform:scaleX(0.8928);font-weight:bold;">Tổng tiền hàng</span>
<span class="t" style="left:385.75px;top:593.17px;font-size:12.5px;line-height:15px;transform:scaleX(0.8379);">16,80</span>
<span class="t" style="left:505.50px;top:593.17px;font-size:12.5px;line-height:15px;transform:scaleX(0.8567);">390.516</span>
<span class="t" style="left:169.60px;top:617.77px;font-size:12.5px;line-height:15px;transform:scaleX(0.9022);font-weight:bold;">Tiền thuế GTGT</span>
<span class="t" style="left:391.25px;top:617.17px;font-size:12.5px;line-height:15px;transform:scaleX(0.8512);">0,00</span>
<span class="t" style="left:538.25px;top:617.17px;font-size:12.5px;line-height:15px;transform:scaleX(0.8571);">0</span>
<span class="t" style="left:555.00px;top:618.17px;font-size:12.5px;line-height:15px;transform:scaleX(0.8743);font-weight:bold;">Tổng tiền thanh toán</span>
<span class="t" style="left:769.50px;top:617.17px;font-size:12.5px;line-height:15px;transform:scaleX(0.8379);">16,80</span>
<span class="t" style="left:884.25px;top:617.17px;font-size:12.5px;line-height:15px;transform:scaleX(0.8622);">390.516</span>
</div>
</body></html>
